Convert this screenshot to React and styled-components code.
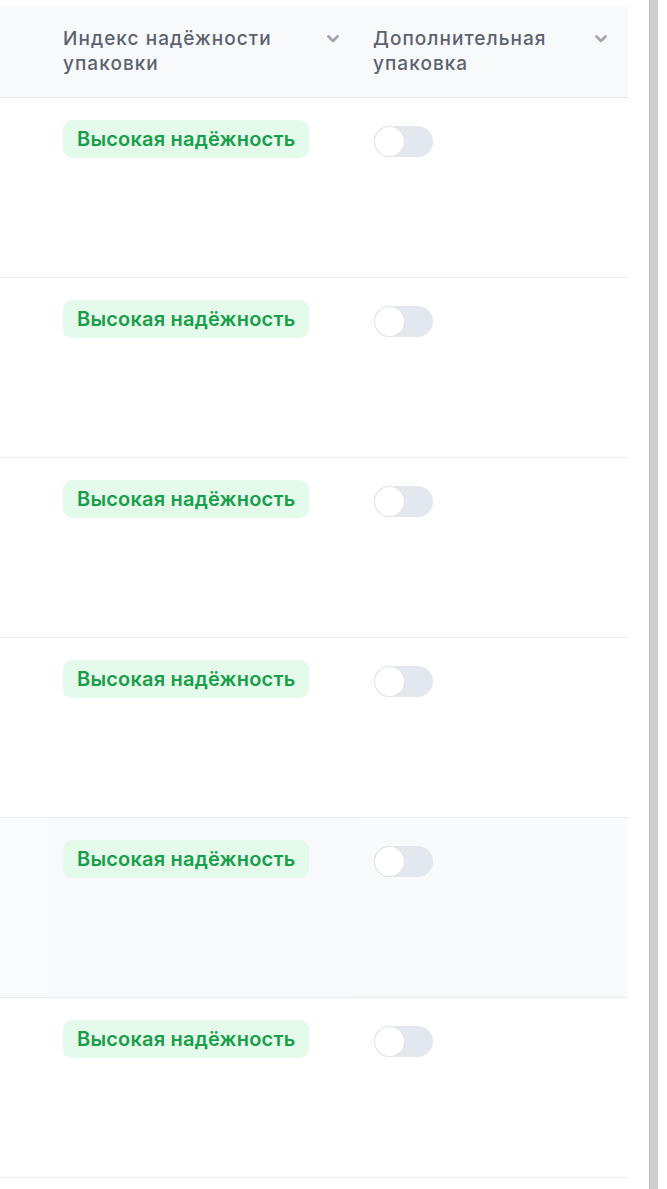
import React from "react";
import styled, { createGlobalStyle } from "styled-components";

const Global = createGlobalStyle`
  html, body { margin: 0; padding: 0; background: #ffffff; }
  body { font-family: Inter, "Noto Sans", "Liberation Sans", sans-serif; -webkit-font-smoothing: antialiased; }
`;

const Page = styled.div`
  display: flex;
  align-items: flex-start;
  width: 667px;
  height: 1189px;
  overflow: hidden;
`;

const Table = styled.div`
  width: 628px;
  margin-top: 7px;
  display: grid;
  grid-template-columns: 48px 310px 270px;
`;

const Scrollbar = styled.div`
  width: 9px;
  height: 1189px;
  margin-left: 21px;
  background: #cdcdcd;
  border-left: 1px solid #c2c2c2;
  box-sizing: border-box;
`;

const HeadCell = styled.div`
  background: #f7f9fb;
  border-bottom: 1px solid #e6e8ec;
  height: 91px;
  box-sizing: border-box;
  padding: 19px ${(p) => (p.$last ? 20 : 18)}px 0 15px;
  display: flex;
  justify-content: space-between;
  align-items: flex-start;
`;

const HeadText = styled.div`
  font-size: 19px;
  line-height: 25px;
  font-weight: 500;
  color: #5c626e;
  letter-spacing: 1.05px;
`;

const Chevron = styled.svg`
  width: 14px;
  height: 14px;
  margin-top: 6px;
  flex-shrink: 0;
`;

const Cell = styled.div`
  height: 180px;
  box-sizing: border-box;
  border-bottom: 1px solid #e8eaed;
  padding: 22px 15px 0;
  background: ${(p) => (p.$hover ? p.$shade || "#f8fafc" : "#ffffff")};
`;

const Badge = styled.span`
  display: inline-flex;
  align-items: center;
  height: 38px;
  padding: 0 13px 0 14px;
  border-radius: 9px;
  background: #e4faea;
  color: #1a9e4b;
  font-size: 20px;
  font-weight: 600;
  letter-spacing: 0.2px;
  white-space: nowrap;
`;

const Toggle = styled.span`
  display: block;
  position: relative;
  width: 59px;
  height: 31px;
  margin-top: 6px;
  margin-left: 1px;
  border-radius: 16px;
  background: #e3e7ee;
  &::after {
    content: "";
    position: absolute;
    left: 1px;
    top: 1px;
    width: 29px;
    height: 29px;
    border-radius: 50%;
    background: #ffffff;
    box-shadow: 0 0 0 1px #e1e4e9;
  }
`;

const ChevronIcon = () => (
  <Chevron viewBox="0 0 14 14" fill="none">
    <path d="M2.5 4.5L7 9L11.5 4.5" stroke="#a0a5ae" strokeWidth="2.8" strokeLinecap="round" strokeLinejoin="round" />
  </Chevron>
);

const rows = [0, 1, 2, 3, 4, 5];

export default function App() {
  return (
    <>
      <Global />
      <Page>
        <Table>
          <HeadCell />
          <HeadCell>
            <HeadText>
              Индекс надёжности
              <br />
              упаковки
            </HeadText>
            <ChevronIcon />
          </HeadCell>
          <HeadCell $last>
            <HeadText>
              Дополнительная
              <br />
              упаковка
            </HeadText>
            <ChevronIcon />
          </HeadCell>
          {rows.map((r) => {
            const hover = r === 4;
            return (
              <React.Fragment key={r}>
                <Cell $hover={hover} $shade="#fafbfd" />
                <Cell $hover={hover} $shade="#f7f9fc">
                  <Badge>Высокая надёжность</Badge>
                </Cell>
                <Cell $hover={hover} $shade="#f9fafc">
                  <Toggle />
                </Cell>
              </React.Fragment>
            );
          })}
        </Table>
        <Scrollbar />
      </Page>
    </>
  );
}
